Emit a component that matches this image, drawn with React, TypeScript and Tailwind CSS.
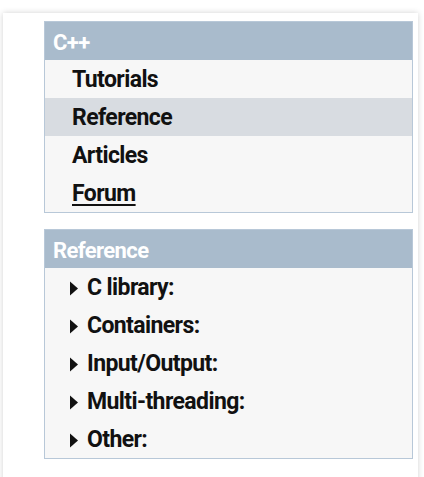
const mainLinks = [
  { label: "Tutorials" },
  { label: "Reference", active: true },
  { label: "Articles" },
  { label: "Forum", underline: true },
];

const refSections = ["C library:", "Containers:", "Input/Output:", "Multi-threading:", "Other:"];

function Caret() {
  return (
    <svg width="10" height="15" viewBox="0 0 10 15" className="shrink-0">
      <path d="M1 0.5 L9 7.5 L1 14.5 Z" fill="#111" />
    </svg>
  );
}

export default function App() {
  return (
    <div
      className="min-h-[477px] bg-white pl-[3px] pr-[6px] pt-[13px] overflow-hidden"
      style={{ fontFamily: "Roboto, 'Liberation Sans', sans-serif" }}
    >
      <div className="bg-white min-h-[470px] shadow-[0_0_6px_rgba(0,0,0,0.18)] pl-[41px] pr-[5px] pt-[8px]">
        {/* C++ box */}
        <div className="border border-[#b8c8d8] bg-[#f7f7f7]">
          <div className="h-[38px] bg-[#a9bbcc] flex items-center pl-[8px] pt-[2px] text-white font-bold text-[22px] tracking-[-0.6px]">
            C++
          </div>
          {mainLinks.map((l) => (
            <div
              key={l.label}
              className={`h-[38px] flex items-center pl-[27px] pt-[2px] font-bold text-[23px] text-[#111] tracking-[-0.6px] ${
                l.active ? "bg-[#d8dce1]" : ""
              }`}
            >
              <span className={l.underline ? "underline underline-offset-[3px] decoration-2" : ""}>{l.label}</span>
            </div>
          ))}
        </div>

        {/* Reference box */}
        <div className="mt-[16px] border border-[#b8c8d8] bg-[#f7f7f7]">
          <div className="h-[38px] bg-[#a9bbcc] flex items-center pl-[8px] pt-[2px] text-white font-bold text-[22px] tracking-[-0.6px]">
            Reference
          </div>
          {refSections.map((s) => (
            <div key={s} className="h-[38px] flex items-center pl-[24px] pt-[2px] gap-[8px] font-bold text-[23px] text-[#111] tracking-[-0.6px]">
              <Caret />
              <span>{s}</span>
            </div>
          ))}
        </div>
      </div>
    </div>
  );
}
